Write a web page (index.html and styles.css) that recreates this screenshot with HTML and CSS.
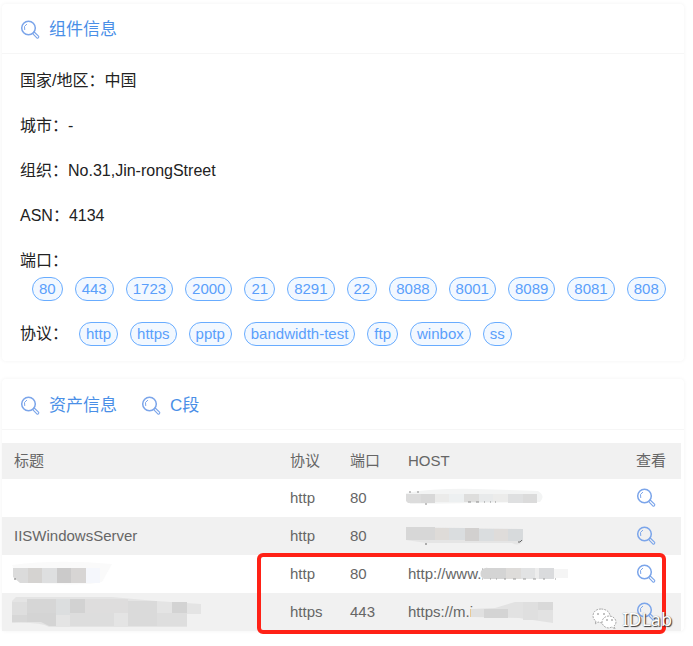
FILE: index.html
```html
<!DOCTYPE html>
<html lang="zh-CN">
<head>
<meta charset="utf-8">
<title>组件信息</title>
<link rel="stylesheet" href="styles.css">
</head>
<body>
<svg width="0" height="0" class="defs" aria-hidden="true">
  <symbol id="lens" viewBox="0 0 20 20">
    <g fill="none" stroke="currentColor" stroke-linecap="round" stroke-linejoin="round">
      <circle cx="8.5" cy="8" r="6.8" stroke-width="1.5"/>
      <path d="M4.6 9.6A4.3 4.3 0 0 1 6.6 4.2" stroke-width="1"/>
      <path d="M13 13.2l1.2-1.2 4.3 4.2a1 1 0 0 1 0 1.4l-.3.3a1 1 0 0 1-1.4 0l-4.1-4.2z" stroke-width="1.1"/>
    </g>
  </symbol>
</svg>
<main>
  <section class="card">
    <header class="card-head">
      <h2 class="title"><svg class="lens"><use href="#lens"/></svg>组件信息</h2>
    </header>
    <div class="info">
      <p>国家/地区：中国</p>
      <p>城市：-</p>
      <p>组织：No.31,Jin-rongStreet</p>
      <p>ASN：4134</p>
      <div class="ports">
        <span>端口：</span>
        <div class="tags"><span class="tag">80</span><span class="tag">443</span><span class="tag">1723</span><span class="tag">2000</span><span class="tag">21</span><span class="tag">8291</span><span class="tag">22</span><span class="tag">8088</span><span class="tag">8001</span><span class="tag">8089</span><span class="tag">8081</span><span class="tag">808</span></div>
      </div>
      <div class="protocols">
        <span>协议：</span>
        <div class="tags"><span class="tag">http</span><span class="tag">https</span><span class="tag">pptp</span><span class="tag">bandwidth-test</span><span class="tag">ftp</span><span class="tag">winbox</span><span class="tag">ss</span></div>
      </div>
    </div>
  </section>

  <section class="card assets">
    <header class="card-head">
      <button class="title"><svg class="lens"><use href="#lens"/></svg>资产信息</button>
      <button class="title"><svg class="lens"><use href="#lens"/></svg>C段</button>
    </header>
    <div class="table-wrap">
      <table>
        <colgroup><col class="c-title"><col class="c-proto"><col class="c-port"><col><col class="c-view"></colgroup>
        <thead>
          <tr><th>标题</th><th>协议</th><th>端口</th><th>HOST</th><th>查看</th></tr>
        </thead>
        <tbody>
          <tr>
            <td></td><td>http</td><td>80</td>
            <td><div class="host"><svg class="mosaic" width="140" height="20">
              <path d="M0 5Q30 0 70 1T132 3Q140 8 134 14L4 16Z" fill="#f3f4f4"/>
              <g><path d="M0 6h15v9H2l-2-2z" fill="#dcdcdc"/><path d="M15 6h14v9H15z" fill="#d8d8d8"/><path d="M29 6h14v8H29z" fill="#ebebea"/><path d="M43 6h15v8H43z" fill="#edf0f1"/><path d="M58 6h15v8H58z" fill="#dededd"/><path d="M73 6h14v8H73z" fill="#e8eaeb"/><path d="M87 6h15v8H87z" fill="#ececeb"/><path d="M102 6h15v9h-15z" fill="#dfe0e1"/><path d="M117 6h14v9h-14z" fill="#dbdbdb"/></g>
              <path d="M3 4h2M11 4h2M19 16h2M62 14h3M70 14h3M78 14h1M84 14h1M89 14h1" stroke="#8c8c8c"/>
            </svg></div></td>
            <td><button class="view" aria-label="查看"><svg class="lens"><use href="#lens"/></svg></button></td>
          </tr>
          <tr>
            <td>IISWindowsServer</td><td>http</td><td>80</td>
            <td><div class="host"><svg class="mosaic" width="140" height="20">
              <path d="M0 1L117 3V15Q113 21 106 17L20 17 0 14Z" fill="#e5e5e5"/>
              <path d="M0 1h29v13H0z" fill="#d7d7d7"/><path d="M29 2h14v12H29z" fill="#dedbd8"/><path d="M43 2h16v12H43z" fill="#dadddf"/><path d="M59 2h14v13H59z" fill="#d2d0cf"/><path d="M73 3h15v12H73z" fill="#dadddf"/><path d="M88 3h14v12H88z" fill="#dfdcda"/><path d="M102 3h15v12h-15z" fill="#d7dadc"/>
              <path d="M19 18h2M112 16h2l2-2" stroke="#666" fill="none"/>
            </svg></div></td>
            <td><button class="view" aria-label="查看"><svg class="lens"><use href="#lens"/></svg></button></td>
          </tr>
          <tr>
            <td><svg class="mosaic" width="130" height="26">
              <path d="M0 4Q45-2 100 3L90 21Q70 26 8 21Z" fill="#fafafa"/>
              <path d="M1 7h15v15H8l-7-6z" fill="#dbdbdb"/><path d="M16 7h14v15H16z" fill="#d5d3d1"/><path d="M30 7h15v15H30z" fill="#dedfe0"/><path d="M45 7h14v15H45z" fill="#cbcaca"/><path d="M59 7h15v15H59z" fill="#d7d5d4"/><path d="M74 7h14v15H74z" fill="#f5f7fc"/>
              <path d="M2 18h2" stroke="#777"/>
            </svg></td>
            <td>http</td><td>80</td>
            <td><div class="host"><span>http://www.</span><svg class="url-mosaic" width="92" height="20">
              <path d="M2 7Q5 3 9 4H27V15H5Q0 12 2 7Z" fill="#d4d4d4"/><path d="M27 4h15v11H27z" fill="#dedcda"/><path d="M42 4h14v11H42z" fill="#e2e3e4"/><path d="M56 4h4v11h-4z" fill="#ededed"/><path d="M60 4h15v11H60z" fill="#dadbdd"/><path d="M75 5h14v9H75z" fill="#f5f5f5"/>
              <path d="M3 5h1M3 15h1M11 15h1M17 15h1M25 15h2M34 15h3M44 15h3M54 15h3M64 15h2M76 15h1" stroke="#999"/>
            </svg></div></td>
            <td><button class="view" aria-label="查看"><svg class="lens"><use href="#lens"/></svg></button></td>
          </tr>
          <tr>
            <td><svg class="mosaic" width="192" height="32">
              <path d="M4 1L100 1 144 5 189 8V18H175V31H37Q28 26 0 27V5Z" fill="#e4e4e4"/>
              <path d="M0 6h15v13H0z" fill="#dedede"/><path d="M15 3h29v16H15z" fill="#d6d6d6"/><path d="M44 3h14v16H44z" fill="#dcdedf"/><path d="M58 3h15v14H58z" fill="#d2d2d2"/><path d="M73 3h43v14H73z" fill="#dedddd"/><path d="M116 5h29v25h-29z" fill="#dadada"/><path d="M160 6h15v11h-15z" fill="#d3d3d3"/><path d="M0 19h15v7H0z" fill="#d7d7d7"/><path d="M15 17h29v13h-7l-8-4H15z" fill="#d4d4d4"/><path d="M58 17h44v13H58z" fill="#dddddd"/><path d="M145 17h30v13h-30z" fill="#dedede"/>
            </svg></td>
            <td>https</td><td>443</td>
            <td><div class="host"><span>https://m.i</span><svg class="url-mosaic" width="84" height="24">
              <path d="M0 9L24 8 44 2H82V23L48 18 0 17Z" fill="#e2e2e2"/><path d="M0 9h13v8H0z" fill="#e0e0e0"/><path d="M13 9h24v9H13z" fill="#d4d4d4"/><path d="M52 2h15v18H52z" fill="#dfdfdf"/><path d="M67 2h15v8H67z" fill="#d9d9d9"/>
            </svg></div></td>
            <td><button class="view" aria-label="查看"><svg class="lens"><use href="#lens"/></svg></button></td>
          </tr>
        </tbody>
      </table>
      <div class="highlight"></div>
      <div class="watermark">
        <svg width="26" height="22" viewBox="0 0 26 22">
          <g fill="#fff" stroke="#888" stroke-width=".7" stroke-dasharray="2 1">
            <path d="M9 1C4 1 1 4 1 8c0 2 1 4 3 5l-1 3 3-2 4 1c5 0 8-3 8-7s-4-7-9-7z"/>
            <path d="M17 8c-4 0-7 3-7 6s3 6 7 6l3-1 3 2-1-3c1-1 2-2 2-4 0-3-3-6-7-6z"/>
          </g>
          <g fill="#777"><circle cx="6" cy="6" r=".8"/><circle cx="12" cy="6" r=".8"/><circle cx="15" cy="12" r=".8"/><circle cx="20" cy="12" r=".8"/></g>
        </svg>
        <span>IDLab</span>
      </div>
    </div>
  </section>
</main>
</body>
</html>
```
FILE: styles.css
```css
* {
  box-sizing: border-box;
}

body {
  margin: 0;
  padding: 4px 9px 12px 2px;
  background: #fff;
  color: #222;
  font: 15px/29px "Liberation Sans", "Noto Sans CJK SC", sans-serif;
}

.defs {
  position: absolute;
}

.card {
  border-radius: 4px;
  background: #fff;
  box-shadow: 0 0 4px #f2f2f2;
}

.assets {
  margin-top: 18px;
}

.card-head {
  display: flex;
  gap: 24px;
  height: 50px;
  padding: 2px 18px 0;
  border-bottom: 1px solid #f6f6f6;
}

.title {
  display: flex;
  align-items: center;
  gap: 9px;
  margin: 0;
  padding: 0;
  border: 0;
  background: none;
  color: #4a8fe7;
  font: 17px/24px "Liberation Sans", "Noto Sans CJK SC", sans-serif;
}

.lens {
  display: block;
  width: 20px;
  height: 20px;
  color: #7ba5ea;
}

.info {
  display: flex;
  flex-direction: column;
  gap: 16px;
  padding: 12px 18px 13px;
  font-size: 16px;
}

.info p {
  margin: 0;
}

.ports > span {
  display: block;
}

.ports .tags {
  padding-left: 12px;
}

.protocols {
  display: flex;
  gap: 11px;
}

.tags {
  display: flex;
  align-items: center;
  gap: 12px;
  min-height: 28px;
  font-size: 15px;
}

.tag {
  padding: 0 6px;
  border: 1px solid #68acff;
  border-radius: 12px;
  background: #f2f8ff;
  color: #5a9ffb;
  line-height: 22px;
  white-space: nowrap;
}

.assets .card-head {
  height: 51px;
  padding-top: 4px;
}

.table-wrap {
  position: relative;
  padding: 13px 3px 0 0;
}

table {
  width: 100%;
  border-collapse: collapse;
  table-layout: fixed;
  color: #666;
  line-height: 20px;
}

.c-title {
  width: 276px;
}

.c-proto {
  width: 60px;
}

.c-port {
  width: 58px;
}

.c-view {
  width: 57px;
}

th,
td {
  height: 38px;
  padding: 0 0 0 12px;
  font-weight: 400;
  text-align: left;
  white-space: nowrap;
}

th {
  height: 36px;
}

thead tr,
tbody tr:nth-child(even) {
  background: #f1f1f1;
}

.host {
  display: flex;
  align-items: center;
}

.mosaic {
  display: block;
  margin-left: -2px;
}

.url-mosaic {
  flex: none;
  margin-left: -2px;
}

.view {
  display: block;
  padding: 0;
  border: 0;
  background: none;
}

.highlight {
  position: absolute;
  top: 123px;
  right: 18px;
  bottom: -3px;
  left: 255px;
  border: 4px solid #ff2116;
  border-radius: 6px;
}

.watermark {
  position: absolute;
  right: 12px;
  bottom: 0;
  display: flex;
  align-items: center;
  gap: 4px;
  color: #fff;
  font: 18px/24px "Noto Sans", sans-serif;
  text-shadow: 1px 1px 1px #333, 0 0 1px #777;
}
```
